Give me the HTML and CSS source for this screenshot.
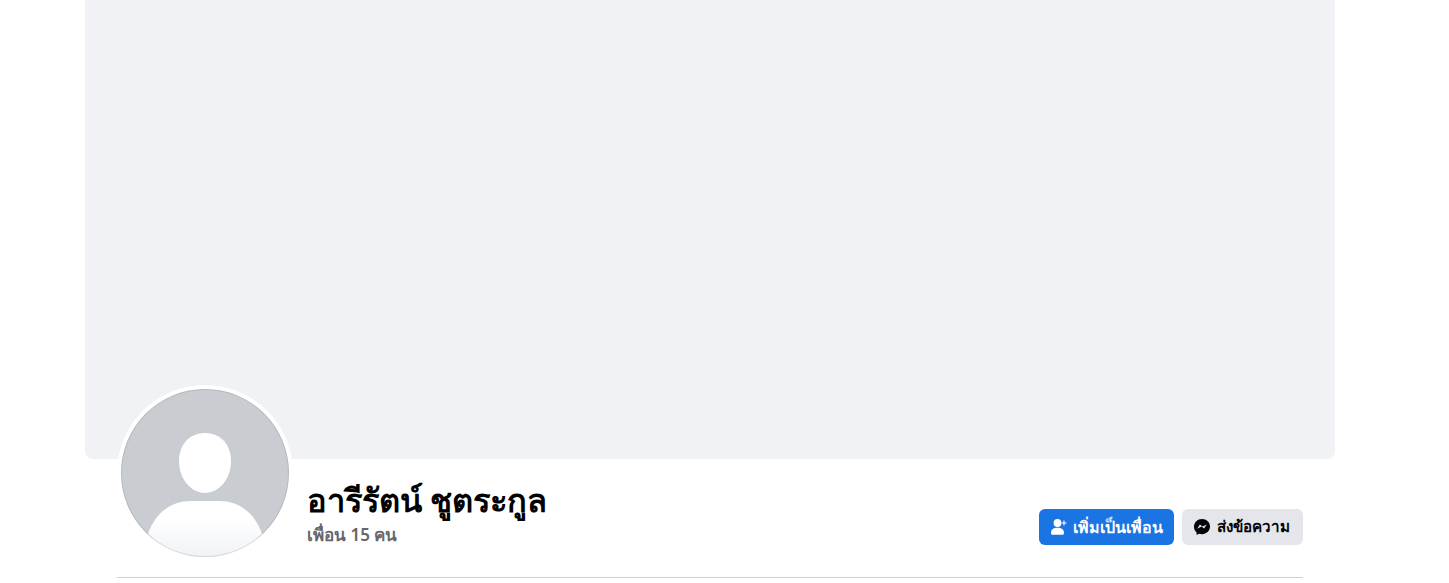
FILE: index.html
```html
<!DOCTYPE html>
<html lang="th">
<head>
  <meta charset="UTF-8" />
  <title>อารีรัตน์ ชูตระกูล</title>
  <link rel="stylesheet" href="styles.css">
</head>
<body>
  <div class="page">
    <div class="cover"></div>
    <div class="profile">
      <div class="avatar">
        <svg viewBox="0 0 168 168" width="168" height="168">
          <defs>
            <linearGradient id="fade" x1="0" y1="0" x2="0" y2="1">
              <stop offset="0.3" stop-color="#ffffff" />
              <stop offset="1" stop-color="#f0f2f5" />
            </linearGradient>
          </defs>
          <circle cx="84" cy="84" r="84" fill="#c9ccd1" />
          <path d="M84 44 C100 44 110 56 110 72 C110 90 98 104 84 104 C70 104 58 90 58 72 C58 56 68 44 84 44 Z" fill="#ffffff" />
          <path d="M27 145 C34 124 50 112 70 112 L98 112 C118 112 134 124 141 145 C126 160 106 168 84 168 C62 168 42 160 27 145 Z" fill="url(#fade)" />
          <circle cx="84" cy="84" r="83.5" fill="none" stroke="#000" stroke-opacity="0.1" />
        </svg>
      </div>
      <div class="info">
        <h1 class="name">อารีรัตน์ ชูตระกูล</h1>
        <div class="friends">เพื่อน 15 คน</div>
      </div>
      <div class="actions">
        <button class="btn btn-primary">
          <svg viewBox="0 0 16 16" width="16" height="16">
            <circle cx="6.5" cy="4" r="3.9" fill="#fff" />
            <path d="M0 14 C0 10.3 2.5 8.7 6.5 8.7 C10.5 8.7 13 10.3 13 14 C13 15.2 12.4 15.8 11.5 15.8 L1.5 15.8 C.6 15.8 0 15.2 0 14 Z" fill="#fff" />
            <path d="M13 1.5 V6.5 M10.5 4 H15.5" stroke="#fff" stroke-width="1.1" fill="none" />
          </svg>
          <span>เพิ่มเป็นเพื่อน</span>
        </button>
        <button class="btn btn-secondary">
          <svg viewBox="0 0 16 16" width="16" height="16">
            <path d="M8 0 C3.5 0 0 3.3 0 7.7 C0 10 1 12 2.6 13.4 V16 L5 14.7 C5.9 15 7 15.2 8 15.2 C12.5 15.2 16 11.9 16 7.6 C16 3.3 12.5 0 8 0 Z" fill="#050505" />
            <path d="M3.2 9.8 L5.9 5.6 L8.5 7.6 L12.8 5.4 L10.1 9.6 L7.5 7.6 Z" fill="#e4e6eb" />
          </svg>
          <span>ส่งข้อความ</span>
        </button>
      </div>
    </div>
    <div class="divider"></div>
  </div>
</body>
</html>
```

FILE: styles.css
```css
* {
  box-sizing: border-box;
}

body {
  margin: 0;
  background: #fff;
  font-family: "Noto Sans", "Open Sans", Roboto, "DejaVu Sans", sans-serif;
  color: #050505;
}

.page {
  width: 1250px;
  margin-left: 85px;
}

.cover {
  height: 459px;
  background: #f0f2f5;
  border-radius: 0 0 8px 8px;
}

.profile {
  display: flex;
  align-items: flex-end;
  height: 118px;
  margin: 0 32px;
}

.avatar {
  width: 176px;
  height: 176px;
  margin-bottom: 16px;
  padding: 4px;
  background: #fff;
  border-radius: 50%;
  flex-shrink: 0;
}

.avatar svg {
  display: block;
}

.info {
  flex: 1;
  margin-left: 14px;
  margin-bottom: 32px;
}

.name {
  margin: 0;
  font-size: 32.6px;
  line-height: 38px;
  font-weight: 700;
  color: #000;
}

.friends {
  margin-top: 6px;
  font-size: 17px;
  line-height: 20px;
  font-weight: 600;
  color: #65676b;
}

.actions {
  display: flex;
  gap: 8px;
  margin-bottom: 32px;
}

.btn {
  display: flex;
  align-items: center;
  gap: 6px;
  height: 36px;
  padding: 0 0 0 12px;
  border: none;
  border-radius: 6px;
  font-family: inherit;
  font-size: 16px;
  font-weight: 600;
  white-space: nowrap;
  cursor: pointer;
}

.btn svg {
  flex-shrink: 0;
}

.btn-primary {
  width: 135px;
  background: #1b74e4;
  color: #fff;
}

.btn-secondary {
  width: 121px;
  gap: 7px;
  font-size: 15.2px;
  background: #e4e6eb;
  color: #050505;
}

.divider {
  height: 1px;
  margin: 0 32px;
  background: #ced0d4;
}
```
